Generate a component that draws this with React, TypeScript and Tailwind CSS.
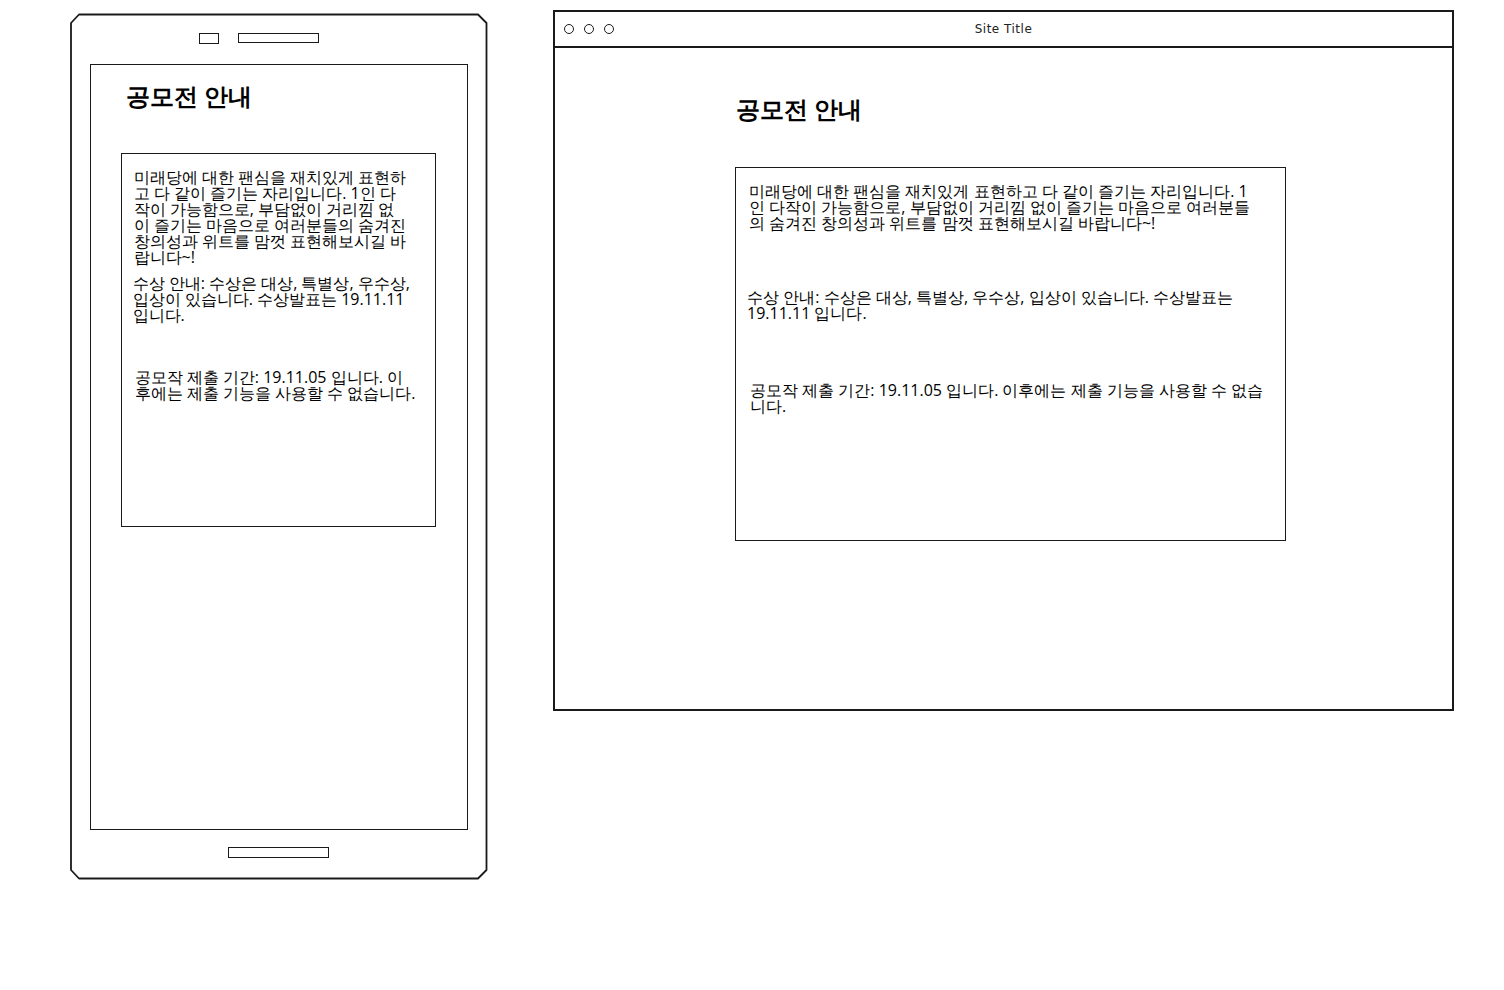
const body = "font-['Open_Sans',sans-serif] text-[16px] leading-4 text-black";
const heading = "font-['Open_Sans',sans-serif] text-[24px] leading-8 font-bold text-black";

const P1 =
  "미래당에 대한 팬심을 재치있게 표현하고 다 같이 즐기는 자리입니다. 1인 다작이 가능함으로, 부담없이 거리낌 없이 즐기는 마음으로 여러분들의 숨겨진 창의성과 위트를 맘껏 표현해보시길 바랍니다~!";
const P2 = "수상 안내: 수상은 대상, 특별상, 우수상, 입상이 있습니다. 수상발표는 19.11.11 입니다.";
const P3 = "공모작 제출 기간: 19.11.05 입니다. 이후에는 제출 기능을 사용할 수 없습니다.";

const PhoneFrame = () => (
  <svg className="absolute inset-0" width="418" height="867" viewBox="0 0 418 867" fill="none">
    <path
      d="M9 1.5 L408 1.5 L416.5 10 L416.5 857 L408 865.5 L9 865.5 L1 857 L1 10 Z"
      stroke="#1a1a1a"
      strokeWidth="1.8"
      strokeLinejoin="round"
    />
  </svg>
);

const Phone = () => (
  <div className="relative ml-[70px] mt-[13px] w-[418px] h-[867px] shrink-0">
    <PhoneFrame />
    <div className="relative flex flex-col h-full">
      {/* camera + speaker */}
      <div className="flex items-start gap-[19px] pl-[129px] pt-[20px] h-[51px]">
        <div className="w-[20px] h-[11px] border-[1.5px] border-[#1a1a1a]" />
        <div className="w-[81px] h-[10px] border-[1.5px] border-[#1a1a1a]" />
      </div>

      {/* screen */}
      <div className="ml-[20px] w-[378px] h-[766px] border-[1.5px] border-[#1a1a1a] pt-[15px]">
        <h1 className={`${heading} ml-[34.5px]`}>공모전 안내</h1>
        <div className="ml-[29.5px] mt-[41px] w-[315px] h-[374px] border-[1.5px] border-[#1a1a1a] pt-[14.5px] pl-[10px]">
          <p className={`${body} ml-[2px] w-[274px]`}>{P1}</p>
          <p className={`${body} ml-[1px] mt-[10px] w-[285px]`}>{P2}</p>
          <p className={`${body} ml-[3px] mt-[46px] w-[282px]`}>{P3}</p>
        </div>
      </div>

      {/* home button */}
      <div className="ml-[158px] mt-[17px] w-[101px] h-[11px] border-[1.5px] border-[#1a1a1a]" />
    </div>
  </div>
);

const Browser = () => (
  <div className="ml-[65px] mt-[10px] w-[901px] h-[701px] shrink-0 border-2 border-[#1a1a1a] flex flex-col">
    <div className="relative h-[36px] border-b-2 border-[#1a1a1a] flex items-center pl-[9px] gap-[10px]">
      <span className="w-[10px] h-[10px] rounded-full border-[1.5px] border-[#1a1a1a]" />
      <span className="w-[10px] h-[10px] rounded-full border-[1.5px] border-[#1a1a1a]" />
      <span className="w-[10px] h-[10px] rounded-full border-[1.5px] border-[#1a1a1a]" />
      <span className="absolute left-0 right-0 top-[8px] text-center font-['DejaVu_Sans',sans-serif] text-[12px] tracking-[0.5px] text-[#222] pointer-events-none">
        Site Title
      </span>
    </div>
    <div className="pl-[180px] pt-[45px]">
      <h1 className={`${heading} ml-[1px]`}>공모전 안내</h1>
      <div className="mt-[42px] w-[551px] h-[374px] border-[1.5px] border-[#1a1a1a] pt-[14.5px] pl-[11px]">
        <p className={`${body} ml-[2px] w-[510px]`}>{P1}</p>
        <p className={`${body} mt-[58px] w-[500px]`}>{P2}</p>
        <p className={`${body} ml-[3px] mt-[61px] w-[518px]`}>{P3}</p>
      </div>
    </div>
  </div>
);

export default function App() {
  return (
    <div className="w-[1504px] h-[990px] bg-white flex items-start">
      <Phone />
      <Browser />
    </div>
  );
}
